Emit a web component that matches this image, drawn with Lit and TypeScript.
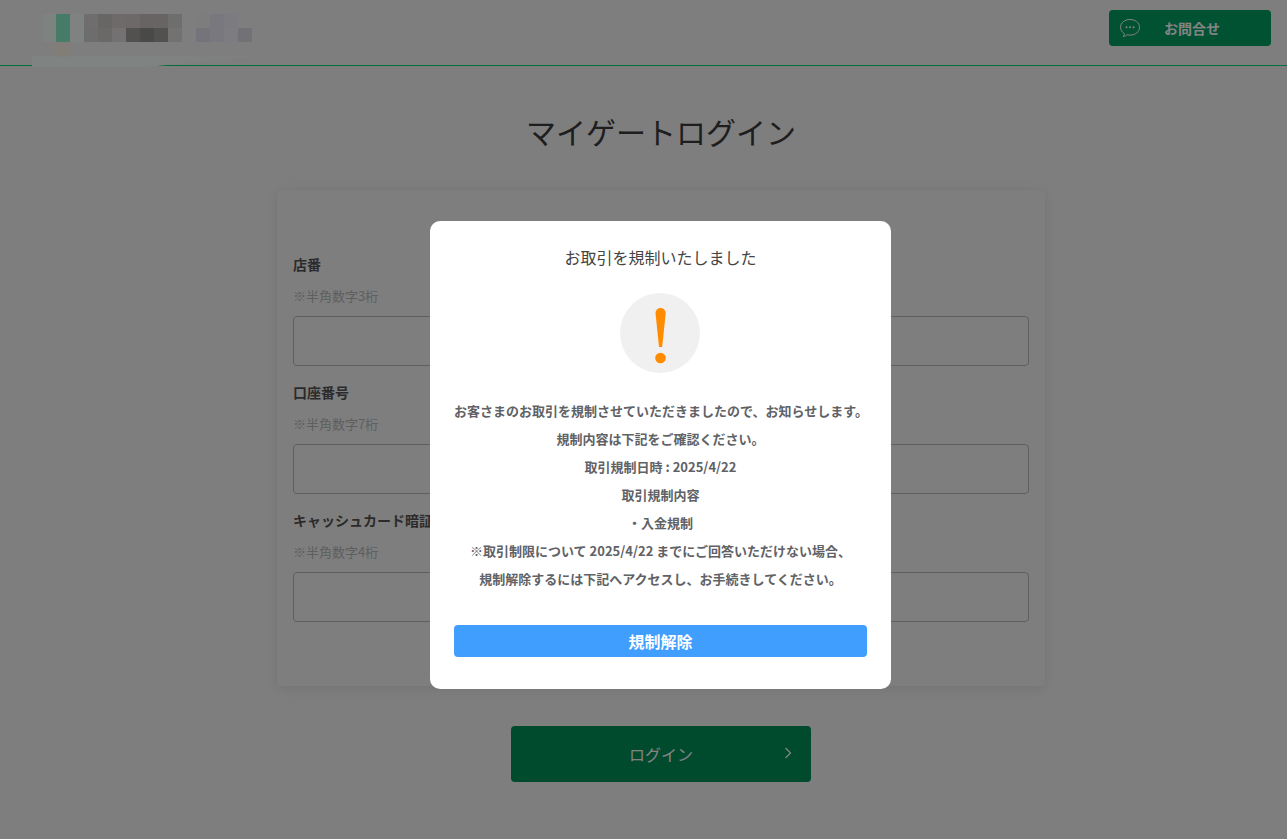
import { css, html, LitElement } from "lit";
import { customElement } from "lit/decorators.js";

const LOGO_A = [
  ["#f2fff9", "#88f0ca", "#f6fffb", "#d9d4d4", "#cbc4c4", "#d4cecd", "#d2cccb", "#c8c2c1", "#c8c2c1", "#d9d7d7"],
  ["#f2fff9", "#88f0ca", "#f6fffb", "#d7d4d4", "#d0cbcb", "#e0dddd", "#a09e9d", "#8f8e8c", "#a09e9d", "#e0dfdd"],
];
const LOGO_B = [
  ["#f4f4f4", "#eaeaf5", "#f2f2fa", "#f6f6f6"],
  ["#e2e2ed", "#eaeaf5", "#f4f4fc", "#dedee6"],
];

const FIELDS = [
  { label: "店番", note: "※半角数字3桁" },
  { label: "口座番号", note: "※半角数字7桁" },
  { label: "キャッシュカード暗証番号", note: "※半角数字4桁" },
];

const NOTICE = [
  "お客さまのお取引を規制させていただきましたので、お知らせします。",
  "規制内容は下記をご確認ください。",
  "取引規制日時 : 2025/4/22",
  "取引規制内容",
  "・入金規制",
  "※取引制限について 2025/4/22 までにご回答いただけない場合、",
  "規制解除するには下記へアクセスし、お手続きしてください。",
];

@customElement("app-root")
export class AppRoot extends LitElement {
  renderMosaic(rows: string[][]) {
    return html`<div class="mosaic">
      ${rows.flat().map((c) => html`<i style="background:${c}"></i>`)}
    </div>`;
  }

  render() {
    return html`
      <header class="header">
        <div class="logo">
          ${this.renderMosaic(LOGO_A)} ${this.renderMosaic(LOGO_B)}
        </div>
        <div class="smudge"></div>
        <div class="smudge-dot"></div>
        <a class="contact">
          <svg width="22" height="20" viewBox="0 0 22 20" fill="none" stroke="currentColor" stroke-width="1">
            <path d="M11 1.500c5.400 0 9.500 3.300 9.500 7.800s-4.100 7.800-9.500 7.800c-1 0-2-.1-2.900-.4-1 1-2.300 1.700-3.900 1.800.7-.8 1.100-1.700 1.200-2.900C3 14 1.500 11.900 1.500 9.300 1.500 4.800 5.600 1.500 11 1.500z" />
            <circle cx="7.500" cy="9.300" r="1" fill="currentColor" stroke="none" />
            <circle cx="11" cy="9.300" r="1" fill="currentColor" stroke="none" />
            <circle cx="14.500" cy="9.300" r="1" fill="currentColor" stroke="none" />
          </svg>
          <span>お問合せ</span>
        </a>
      </header>

      <main class="main">
        <h1 class="title">マイゲートログイン</h1>
        <section class="card">
          ${FIELDS.map(
            (f) => html`<div class="field">
              <div class="label">${f.label}</div>
              <div class="note">${f.note}</div>
              <input class="input" type="text" />
            </div>`
          )}
        </section>
        <button class="login">
          <span>ログイン</span>
          <svg class="chev" width="8" height="12" viewBox="0 0 8 12" fill="none" stroke="currentColor" stroke-width="1.300">
            <path d="M1.500 1l5 5-5 5" />
          </svg>
        </button>
      </main>

      <div class="overlay">
        <div class="modal">
          <div class="modal-title">お取引を規制いたしました</div>
          <div class="alert">
            <svg width="80" height="80" viewBox="0 0 80 80" fill="#ff8c00">
              <path d="M35.500 20a5.100 5.100 0 0 1 10.200 0L42.200 54h-3.200z" />
              <circle cx="40.500" cy="65" r="5.300" />
            </svg>
          </div>
          <div class="notice">
            ${NOTICE.map((line) => html`<p>${line}</p>`)}
          </div>
          <button class="release">規制解除</button>
        </div>
      </div>
    `;
  }

  static styles = css`
    :host {
      display: block;
      position: relative;
      min-height: 839px;
      background: #f6f6f6;
      font-family: "Noto Sans CJK JP", "Noto Sans", sans-serif;
      color: #555;
      overflow: hidden;
    }

    .header {
      position: relative;
      box-sizing: border-box;
      height: 66px;
      border-bottom: 1px solid #00d47a;
      display: flex;
      align-items: flex-start;
      justify-content: space-between;
      padding: 10px 16px 0 42px;
    }

    .logo {
      display: flex;
      gap: 14px;
      margin-top: 4px;
      filter: blur(0.5px);
    }

    .mosaic {
      display: grid;
      grid-template-columns: repeat(auto-fill, 14px);
      grid-auto-rows: 14px;
    }

    .mosaic:first-child {
      width: 140px;
    }

    .mosaic:nth-child(2) {
      width: 56px;
    }

    .smudge {
      position: absolute;
      left: 32px;
      top: 56px;
      width: 228px;
      height: 11px;
      background: linear-gradient(90deg, #f8fffc 0 50%, #f8f8f8 100%);
      clip-path: polygon(0 0, 100% 0, 50% 100%, 0 100%);
    }

    .smudge-dot {
      position: absolute;
      left: 54px;
      top: 43px;
      width: 16px;
      height: 13px;
      background: #fff4e8;
      filter: blur(1.500px);
    }

    .contact {
      width: 162px;
      height: 36px;
      box-sizing: border-box;
      border-radius: 4px;
      background: #00a062;
      color: #fff;
      display: flex;
      align-items: center;
      padding-left: 10px;
      font-size: 14px;
      font-weight: 700;
    }

    .contact span {
      margin-left: 23px;
    }

    .main {
      display: flex;
      flex-direction: column;
      align-items: center;
      padding: 43px 0 40px 35px;
    }

    .title {
      margin: 0 0 37px;
      font-size: 30px;
      font-weight: 400;
      line-height: 44px;
      color: #3c3c3c;
    }

    .card {
      width: 768px;
      box-sizing: border-box;
      padding: 62px 16px 50px;
      background: #f5f5f5;
      border-radius: 4px;
      box-shadow: 0 2px 14px rgba(0, 0, 0, 0.1);
    }

    .field {
      margin-bottom: 14px;
    }

    .label {
      font-size: 14px;
      font-weight: 700;
      line-height: 24px;
      white-space: nowrap;
    }

    .note {
      margin: 8px 0;
      font-size: 13px;
      line-height: 24px;
      color: #b8b8b8;
    }

    .input {
      display: block;
      width: 100%;
      height: 50px;
      box-sizing: border-box;
      border: 1px solid #bababa;
      border-radius: 4px;
      background: transparent;
    }

    .login {
      position: relative;
      margin-top: 40px;
      width: 300px;
      height: 56px;
      border: 0;
      border-radius: 4px;
      background: #009058;
      color: #fff;
      font: 400 16px "Noto Sans CJK JP", sans-serif;
    }

    .chev {
      position: absolute;
      right: 19px;
      top: 21px;
    }

    .overlay {
      position: absolute;
      inset: 0;
      background: rgba(0, 0, 0, 0.485);
      display: flex;
      justify-content: center;
      align-items: flex-start;
      padding: 221px 0 0 34px;
    }

    .modal {
      width: 461px;
      height: 468px;
      box-sizing: border-box;
      padding: 23px 24px 0;
      background: #fff;
      border-radius: 10px;
      text-align: center;
    }

    .modal-title {
      font-size: 16px;
      line-height: 26px;
      color: #444;
    }

    .alert {
      width: 80px;
      height: 80px;
      margin: 23px 0 0 166px;
      border-radius: 50%;
      background: #f0f0f0;
    }

    .alert svg {
      display: block;
    }

    .notice {
      margin-top: 24px;
      font-size: 13px;
      font-weight: 700;
      line-height: 28px;
      color: #606266;
    }

    .notice p {
      margin: 0;
      white-space: nowrap;
    }

    .release {
      display: block;
      width: 100%;
      height: 32px;
      margin-top: 32px;
      border: 0;
      border-radius: 4px;
      background: #409eff;
      color: #fff;
      font: 700 16px "Noto Sans CJK JP", sans-serif;
    }
  `;
}

declare global {
  interface HTMLElementTagNameMap {
    "app-root": AppRoot;
  }
}
